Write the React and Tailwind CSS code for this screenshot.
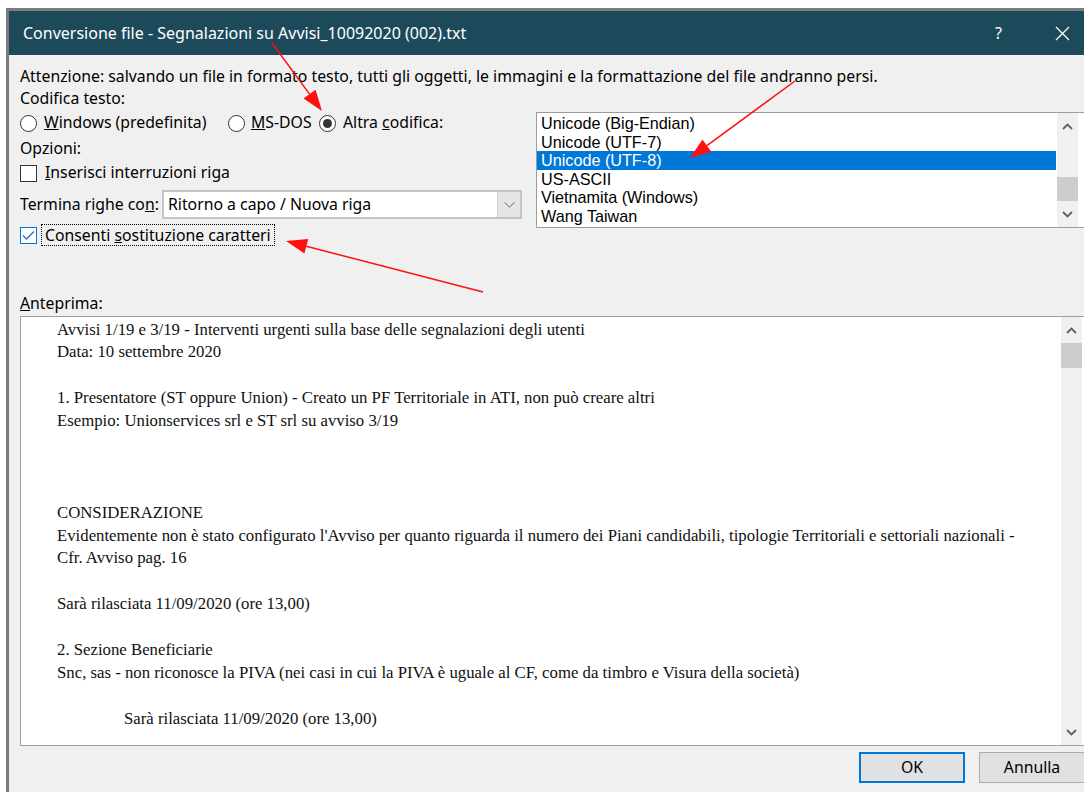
import React from 'react';

const encodings = [
  'Unicode (Big-Endian)',
  'Unicode (UTF-7)',
  'Unicode (UTF-8)',
  'US-ASCII',
  'Vietnamita (Windows)',
  'Wang Taiwan',
];

const previewLines = [
  'Avvisi 1/19 e 3/19 - Interventi urgenti sulla base delle segnalazioni degli utenti',
  'Data: 10 settembre 2020',
  '',
  '1. Presentatore (ST oppure Union) - Creato un PF Territoriale in ATI, non può creare altri',
  'Esempio: Unionservices srl e ST srl su avviso 3/19',
  '',
  '',
  '',
  'CONSIDERAZIONE',
  "Evidentemente non è stato configurato l'Avviso per quanto riguarda il numero dei Piani candidabili, tipologie Territoriali e settoriali nazionali -",
  'Cfr. Avviso pag. 16',
  '',
  'Sarà rilasciata 11/09/2020 (ore 13,00)',
  '',
  '2. Sezione Beneficiarie',
  'Snc, sas - non riconosce la PIVA (nei casi in cui la PIVA è uguale al CF, come da timbro e Visura della società)',
  '',
];

const Chevron = ({ up }) => (
  <svg width="11" height="7" viewBox="0 0 11 7">
    <path
      d={up ? 'M1 6 L5.5 1.5 L10 6' : 'M1 1 L5.5 5.5 L10 1'}
      fill="none"
      stroke="#606060"
      strokeWidth="1.8"
    />
  </svg>
);

// Classic vertical scrollbar: arrow, track, thumb, arrow
const ScrollBar = ({ trackBefore, thumb, className }) => (
  <div className={`w-[21px] bg-[#f0f0f0] flex flex-col ${className}`}>
    <div className="h-[26px] flex items-center justify-center">
      <Chevron up />
    </div>
    <div className={trackBefore} />
    <div className={`${thumb} bg-[#cdcdcd]`} />
    <div className="flex-1" />
    <div className="h-[26px] flex items-center justify-center">
      <Chevron />
    </div>
  </div>
);

const Radio = ({ checked }) => (
  <span className="w-[17px] h-[17px] rounded-full border border-[#333333] bg-white flex items-center justify-center shrink-0">
    {checked && <span className="w-[9px] h-[9px] rounded-full bg-[#333333]" />}
  </span>
);

const Arrow = ({ x1, y1, x2, y2 }) => {
  const len = Math.hypot(x2 - x1, y2 - y1);
  const ux = (x2 - x1) / len;
  const uy = (y2 - y1) / len;
  const bx = x2 - ux * 21;
  const by = y2 - uy * 21;
  const px = -uy * 7.5;
  const py = ux * 7.5;
  return (
    <g>
      <line x1={x1} y1={y1} x2={bx} y2={by} stroke="#ff1010" strokeWidth="1.5" />
      <polygon points={`${x2},${y2} ${bx + px},${by + py} ${bx - px},${by - py}`} fill="#ff1010" />
    </g>
  );
};

export default function App() {
  return (
    <div className="relative w-[1084px] h-[792px] overflow-hidden bg-white">
      <div className="ml-[6px] mt-[8px] w-[1100px] h-[800px] border-l-[3px] border-t-[3px] border-[#7b7b7b] font-['Noto_Sans',sans-serif] text-black">
        {/* title bar */}
        <div className="h-[44px] bg-[#1d4a5b] flex items-center pl-[14px] text-white">
          <span className="text-[16px]">Conversione file - Segnalazioni su Avvisi_10092020 (002).txt</span>
          <span className="ml-auto mr-[104px] text-[16px]">?</span>
        </div>

        <div className="bg-[#f0f0f0] h-[756px] pl-[11px] pt-[10px] text-[15.8px]">
          <p className="h-[22px] leading-[22px]">
            Attenzione: salvando un file in formato testo, tutti gli oggetti, le immagini e la formattazione del file andranno persi.
          </p>

          <div className="flex">
            <div className="w-[502px]">
              <p className="h-[22px] leading-[22px]">Codifica testo:</p>
              <div className="mt-[3px] h-[22px] flex items-center">
                <div className="w-[208px] flex items-center gap-[7px]">
                  <Radio />
                  <span><u>W</u>indows (predefinita)</span>
                </div>
                <div className="w-[91px] flex items-center gap-[6px]">
                  <Radio />
                  <span><u>M</u>S-DOS</span>
                </div>
                <div className="flex items-center gap-[7px]">
                  <Radio checked />
                  <span>Altra <u>c</u>odifica:</span>
                </div>
              </div>
              <p className="mt-[3px] h-[22px] leading-[22px]">Opzioni:</p>
              <div className="mt-[3px] h-[22px] flex items-center gap-[8px]">
                <span className="w-[17px] h-[17px] border border-[#333333] bg-white shrink-0" />
                <span><u>I</u>nserisci interruzioni riga</span>
              </div>
              <div className="mt-[6px] h-[29px] flex items-center">
                <span className="w-[142px]">Termina righe co<u>n</u>:</span>
                <div className="w-[360px] h-[29px] border-2 border-[#c4c4c4] bg-white flex items-center">
                  <span className="flex-1 pl-[4px]">Ritorno a capo / Nuova riga</span>
                  <div className="w-[23px] h-full bg-[#e5e5e5] border-l border-[#cfcfcf] flex items-center justify-center">
                    <svg width="11" height="6" viewBox="0 0 11 6">
                      <path d="M0.5 0.5 L5.5 5 L10.5 0.5" fill="none" stroke="#6a6a6a" strokeWidth="1" />
                    </svg>
                  </div>
                </div>
              </div>
              <div className="mt-[5px] h-[22px] flex items-center gap-[4px]">
                <span className="w-[17px] h-[17px] border border-[#0078d7] bg-white shrink-0 flex items-center justify-center">
                  <svg width="13" height="11" viewBox="0 0 13 11">
                    <path d="M1 5.5 L4.5 9 L12 1.5" fill="none" stroke="#2a6fc9" strokeWidth="1.4" />
                  </svg>
                </span>
                <span className="h-[22px] leading-[20px] border border-dotted border-black px-[3px]">
                  Consenti <u>s</u>ostituzione caratteri
                </span>
              </div>
            </div>

            {/* encoding list, compact rows */}
            <div className="ml-[14px] mt-[25px] w-[549px] h-[116px] border border-[#9c9c9c] bg-white flex">
              <div className="flex-1 pt-[1px] pr-[1px] font-['Liberation_Sans',sans-serif] text-[16.2px]">
                {encodings.map((name, i) => (
                  <div
                    key={name}
                    className={`h-[18.6px] leading-[18.6px] pl-[4px] ${i === 2 ? 'bg-[#0078d7] text-white' : ''}`}
                  >
                    {name}
                  </div>
                ))}
              </div>
              <ScrollBar trackBefore="h-[38px]" thumb="h-[24px]" className="mr-[6px]" />
            </div>
          </div>

          <p className="mt-[46px] h-[22px] leading-[22px]">
            <u>A</u>nteprima:
          </p>

          {/* preview */}
          <div className="mt-[2px] w-[1065px] h-[430px] border border-[#a0a0a0] bg-white flex">
            <div className="flex-1 pl-[36px] pt-[1.5px] font-['Liberation_Serif',serif] text-[16.75px] text-[#111111]">
              {previewLines.map((line, i) => (
                <div key={i} className="h-[22.9px] leading-[22.9px] whitespace-pre">
                  {line}
                </div>
              ))}
              <div className="h-[22.9px] leading-[22.9px] pl-[67px]">Sarà rilasciata 11/09/2020 (ore 13,00)</div>
            </div>
            <ScrollBar trackBefore="h-0" thumb="h-[25px]" className="mr-[2px]" />
          </div>

          <div className="mt-[6px] w-[1065px] flex justify-end gap-[14px]">
            <button className="w-[106px] h-[31px] border-2 border-[#0078d7] bg-[#e1e1e1] text-[15.8px]">OK</button>
            <button className="w-[106px] h-[31px] border border-[#adadad] bg-[#e1e1e1] text-[15.8px]">Annulla</button>
          </div>
        </div>
      </div>

      {/* close glyph in the title bar */}
      <svg className="absolute left-[1055px] top-[26px]" width="15" height="15" viewBox="0 0 15 15">
        <path d="M1 1 L14 14 M14 1 L1 14" stroke="#ffffff" strokeWidth="1.3" />
      </svg>

      {/* red annotation arrows */}
      <svg className="absolute inset-0 pointer-events-none" width="1084" height="792">
        <Arrow x1={272} y1={43} x2={322} y2={111} />
        <Arrow x1={795} y1={81} x2={690} y2={158} />
        <Arrow x1={483} y1={292} x2={286} y2={241} />
      </svg>
    </div>
  );
}
